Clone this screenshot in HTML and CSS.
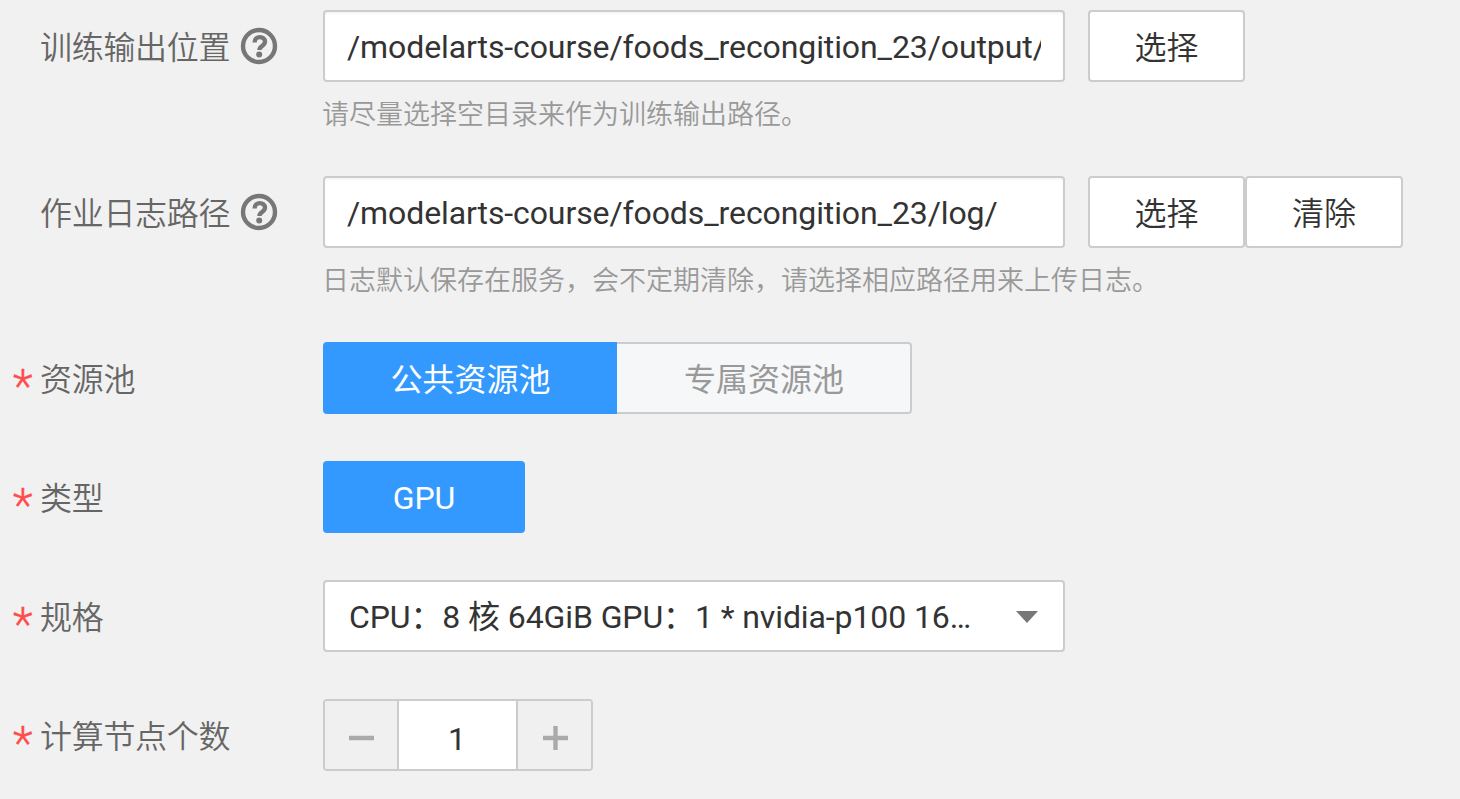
FILE: index.html
```html
<!DOCTYPE html>
<html lang="zh-CN">
<head><meta charset="utf-8"><title>训练作业</title><link rel="stylesheet" href="styles.css"></head>
<body>
<form class="form">
  <div class="row tall">
    <div class="label"><span class="star"></span><span class="name">训练输出位置</span><svg class="help" viewBox="0 0 38 38"><circle cx="19" cy="19" r="16"/><path d="M14.6 15.6c0-7.4 10.4-7 10.4-.8 0 4.2-5.6 4.2-5.6 8.2"/><circle class="dot" cx="19.2" cy="27.6" r="3"/></svg></div>
    <div class="content">
      <div class="line"><div class="input"><span class="value">/modelarts-course/foods_recongition_23/output/</span></div><button type="button" class="btn">选择</button></div>
      <p class="hint">请尽量选择空目录来作为训练输出路径。</p>
    </div>
  </div>
  <div class="row tall">
    <div class="label"><span class="star"></span><span class="name">作业日志路径</span><svg class="help" viewBox="0 0 38 38"><circle cx="19" cy="19" r="16"/><path d="M14.6 15.6c0-7.4 10.4-7 10.4-.8 0 4.2-5.6 4.2-5.6 8.2"/><circle class="dot" cx="19.2" cy="27.6" r="3"/></svg></div>
    <div class="content">
      <div class="line"><div class="input"><span class="value">/modelarts-course/foods_recongition_23/log/</span></div><button type="button" class="btn">选择</button><button type="button" class="btn clear">清除</button></div>
      <p class="hint">日志默认保存在服务，会不定期清除，请选择相应路径用来上传日志。</p>
    </div>
  </div>
  <div class="row">
    <div class="label"><span class="star">*</span><span class="name">资源池</span></div>
    <div class="line"><div class="tab active">公共资源池</div><div class="tab other">专属资源池</div></div>
  </div>
  <div class="row">
    <div class="label"><span class="star">*</span><span class="name">类型</span></div>
    <div class="line"><div class="tab active gpu">GPU</div></div>
  </div>
  <div class="row">
    <div class="label"><span class="star">*</span><span class="name">规格</span></div>
    <div class="input select"><span class="value">CPU：8 核 64GiB GPU：1 * nvidia-p100 16…</span><svg class="caret" viewBox="0 0 22 12"><path d="M0 0h22L11 12z"/></svg></div>
  </div>
  <div class="row">
    <div class="label"><span class="star">*</span><span class="name">计算节点个数</span></div>
    <div class="stepper"><span class="step"><svg viewBox="0 0 26 26"><path d="M1 13h25"/></svg></span><span class="count">1</span><span class="step"><svg viewBox="0 0 26 26"><path d="M1 13h25M13.5 1v24"/></svg></span></div>
  </div>
</form>
</body>
</html>
```
FILE: styles.css
```css
* { box-sizing: border-box; }
body { margin: 0; background: #f1f1f1; color: #333; font: 32px/1 Roboto, "Noto Sans CJK SC", sans-serif; overflow: hidden; }
.form { width: 1460px; height: 799px; padding-top: 10px; overflow: hidden; }
.row { display: flex; height: 119px; }
.row.tall { height: 166px; }
.label { display: flex; align-items: center; width: 323px; height: 72px; padding-left: 13px; color: #666; flex: none; }
.star { width: 27px; color: #ff4c4c; font-size: 46px; font-weight: 300; line-height: 36px; height: 20px; -webkit-text-stroke: 0.4px #ff4c4c; }
.name { padding-top: 3px; white-space: nowrap; letter-spacing: -0.3px; font-weight: 350; }
.help { width: 38px; height: 38px; margin-left: 10px; fill: none; stroke: #777; stroke-width: 4.4; }
.help .dot { fill: #777; stroke: none; }
.line { display: flex; height: 72px; }
.input { display: flex; align-items: center; width: 742px; height: 72px; padding: 0 22px; border: 2px solid #ccc; border-radius: 4px; background: #fff; box-shadow: inset 0 2px 2px rgba(0, 0, 0, .04); }
.value { flex: 1; overflow: hidden; white-space: nowrap; line-height: 44px; padding-top: 1px; letter-spacing: -0.1px; }
.btn { width: 157px; height: 72px; margin: 0 0 0 23px; padding: 3px 0 0; border: 2px solid #ccc; border-radius: 4px; background: #fff; color: #333; font: inherit; font-weight: 350; }
.btn.clear { margin-left: 0; width: 158px; }
.hint { margin: 18px 0 0 -1px; font-size: 27px; font-weight: 350; line-height: 30px; color: #999; white-space: nowrap; }
.tab { display: flex; align-items: center; justify-content: center; height: 72px; width: 294px; padding: 3px 0 0 1px; }
.active { background: #3399ff; color: #fff; border-radius: 4px 0 0 4px; }
.other { width: 295px; background: #f5f7f9; color: #999; border: 2px solid #ccc; border-left: 0; border-radius: 0 4px 4px 0; }
.gpu { width: 202px; border-radius: 4px; padding: 2px 0 0; }
.select { padding-left: 24px; padding-right: 25px; box-shadow: none; }
.caret { width: 22px; height: 12px; margin-top: 2px; fill: #777; }
.stepper { display: flex; width: 270px; height: 72px; border: 2px solid #ccc; border-radius: 4px; background: #fff; overflow: hidden; }
.step { display: flex; align-items: center; justify-content: center; flex: none; width: 73px; padding-top: 5px; background: #f0f0f0; }
.step:first-child { width: 72px; }
.step svg { width: 26px; height: 26px; fill: none; stroke: #aaa; stroke-width: 4.4; }
.count { display: flex; align-items: center; justify-content: center; width: 121px; padding: 7px 1px 0 0; border: solid #ccc; border-width: 0 2px; }
```
